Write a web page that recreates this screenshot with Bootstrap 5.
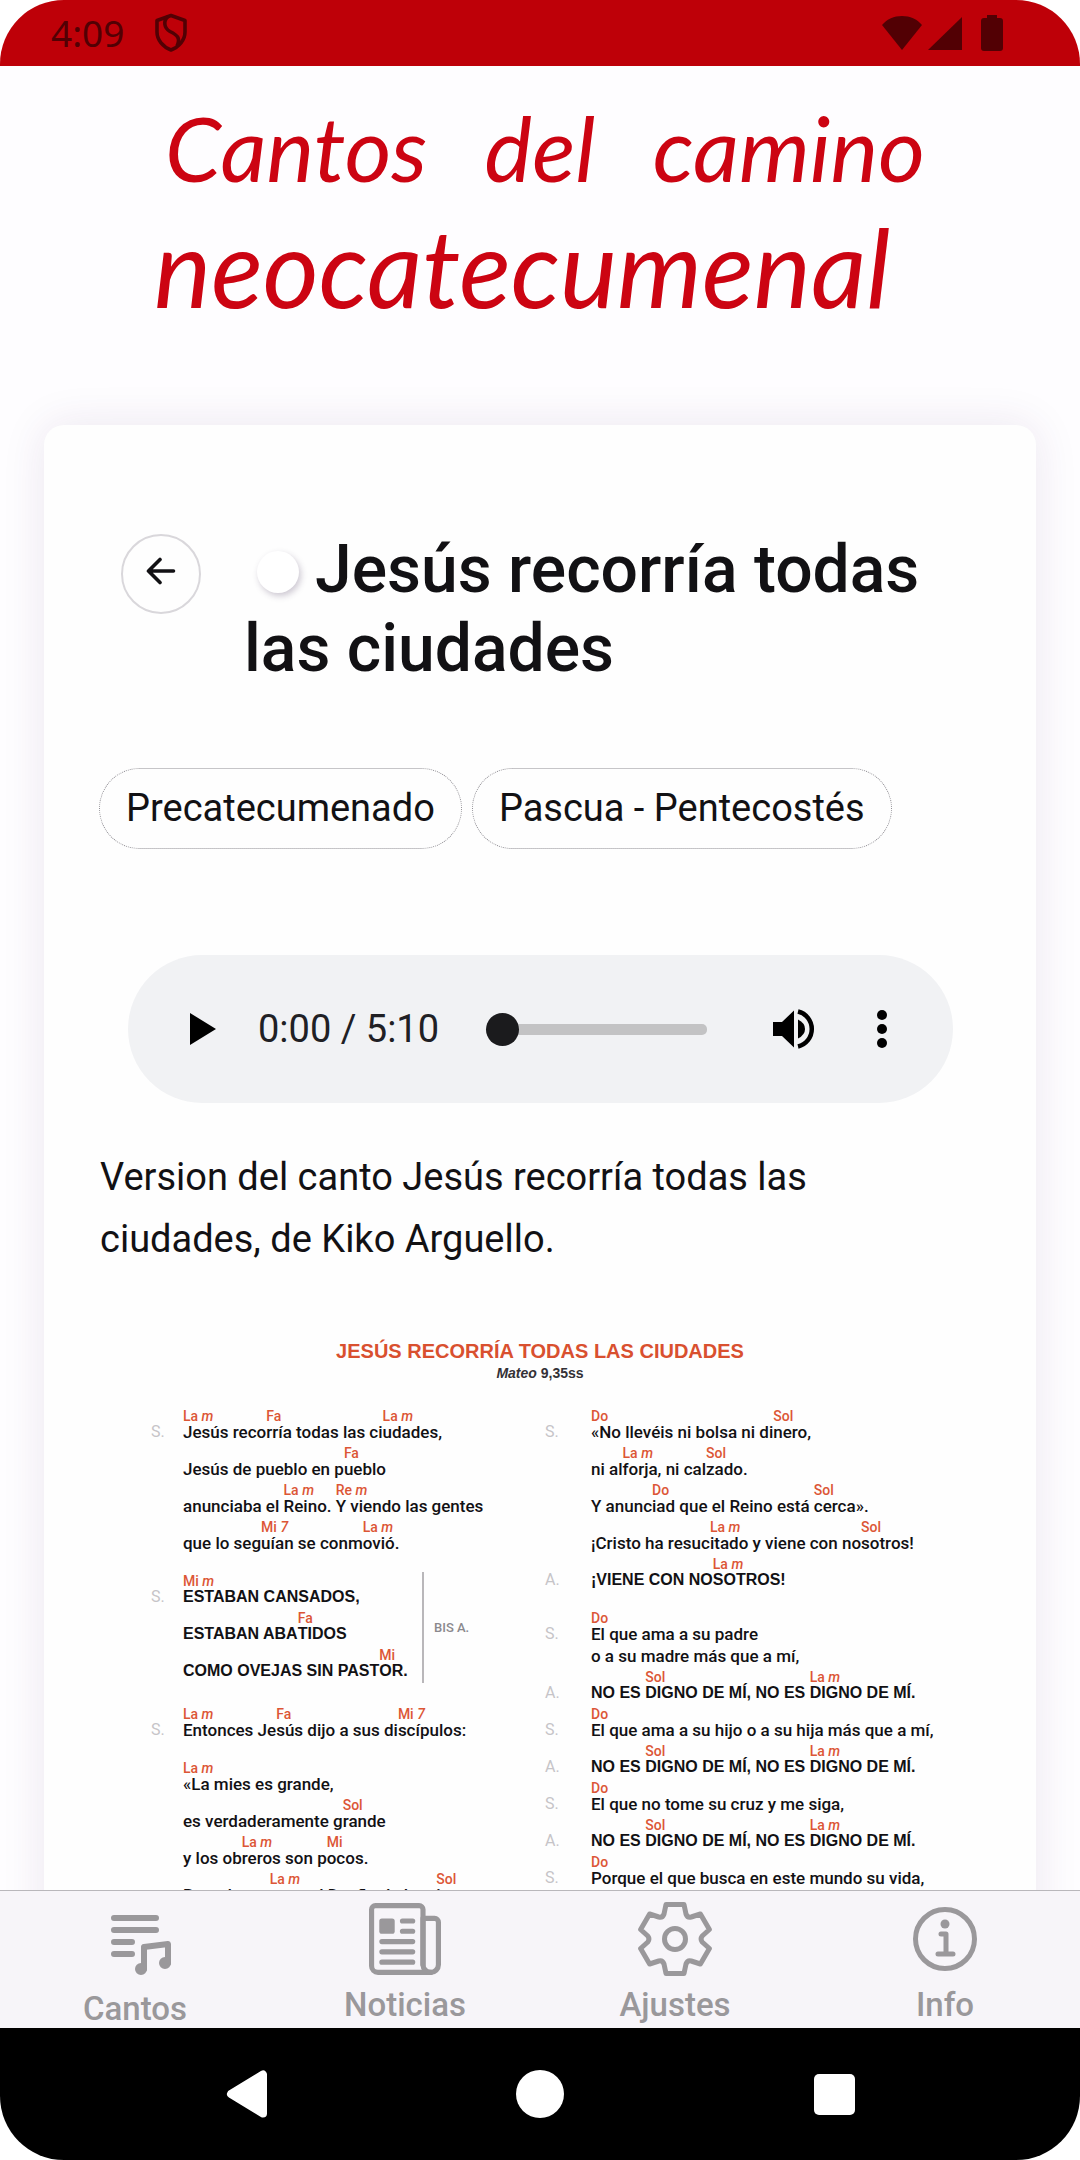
<!DOCTYPE html>
<html lang="es">
<head>
<meta charset="utf-8">
<meta name="viewport" content="width=device-width, initial-scale=1">
<title>Jesús recorría todas las ciudades</title>
<link href="https://cdn.jsdelivr.net/npm/bootstrap@5.3.0/dist/css/bootstrap.min.css" rel="stylesheet">
<style>
  body { font-family: Roboto, "Liberation Sans", sans-serif; background: #fff; color: #121114; }
  .device { border-radius: 64px; background: #fefdff; }
  svg { display: block; }

  .status-bar { height: 66px; flex: none; padding: 0 77px 0 51px; background: #be0008; color: #520004; }
  .clock { font: 37px/50px "Noto Sans", sans-serif; margin-right: 31px; }
  .status-icons { gap: 6px; }
  .battery { margin-left: 13px; }

  .brand { height: 359px; padding-top: 27px; color: #cc0412; font-family: Lato, sans-serif; font-style: italic; }
  .brand-top { font-size: 90px; line-height: 108px; padding: 0 155px 0 165px; }
  .brand-main { font-size: 108px; line-height: 130px; padding-left: 154px; }

  .song-card { margin: 0 44px; padding: 105px 56px 60px; border: 0; border-radius: 20px; background: #fefefe; color: inherit; box-shadow: 0 0 44px rgba(70, 30, 100, .1); }
  .back-btn { width: 80px; height: 80px; margin: 4px 43px 0 21px; padding: 0 0 6px; flex: none; border: 2px solid #d9d7db; border-radius: 50%; background: transparent; color: #121114; }
  .song-title { font-size: 66px; line-height: 79px; font-weight: 500; }
  .fav-dot { display: inline-block; width: 42px; height: 42px; margin: 0 16px 0 13px; vertical-align: -1px; border-radius: 50%; background: #fff; box-shadow: 2px 3px 6px rgba(60, 40, 80, .25); }
  .tags { gap: 10px; margin: 80px 0 0 -1px; }
  .tag { padding: 0 26px; border: 1px dotted #8e8c92; border-radius: 41px; font-size: 38px; line-height: 79px; color: inherit; text-decoration: none; }

  .player { height: 148px; margin: 106px 27px 0 28px; padding: 0 66px 0 62px; border-radius: 74px; background: #f1f2f4; }
  .player button { padding: 0; border: 0; background: none; color: #000; }
  .player-time { margin: 0 47px 0 42px; font-size: 38px; line-height: 48px; color: #202024; white-space: nowrap; }
  .seek { flex: 1 1 0; min-width: 0; height: 34px; margin: 0 66px 0 0; appearance: none; -webkit-appearance: none; background: transparent; }
  .seek::-webkit-slider-runnable-track { height: 11px; border-radius: 5px; background: #c3c3c4; }
  .seek::-webkit-slider-thumb { -webkit-appearance: none; width: 33px; height: 33px; margin-top: -11px; border-radius: 50%; background: #1b1b1d; }
  .volume { margin-right: 62px; }
  .about { margin: 43px 0 69px; padding-right: 24px; font-size: 38px; line-height: 62px; }

  .sheet { font-size: 17px; font-weight: 500; padding: 0 41px 0 51px; }
  .sheet-head { text-align: center; font-family: "Liberation Sans", sans-serif; font-weight: 700; padding-right: 10px; margin-bottom: 24px; }
  .sheet-head h2 { font-size: 20px; line-height: 24px; font-weight: 700; color: #d9502f; margin: 0; }
  .sheet-head p { font-size: 14px; line-height: 20px; color: #333136; margin: 0; }
  .verse { margin-bottom: 22px; }
  .line { display: flex; align-items: flex-end; margin-bottom: 5px; line-height: 14px; white-space: pre; }
  .line::before { content: attr(data-who); flex: none; width: 32px; color: #c6c4c8; font-family: Roboto, sans-serif; font-size: 16px; font-weight: 400; }
  .col-right .line::before { width: 46px; }
  .solo { padding-top: 3px; }
  .all { font-family: "Liberation Sans", sans-serif; font-size: 16px; font-weight: 700; }
  .at { display: flex; flex-direction: column; }
  .at i { font: 500 14px/18px Roboto, sans-serif; color: #dc5636; }
  .at em { font-style: italic; }
  .repeat { width: 273px; border-right: 2px solid #b9b7ba; }
  .repeat-note { margin-left: 10px; font: 500 13px/16px Roboto, sans-serif; color: #8b898d; }

  .tab-bar { height: 138px; flex: none; border-top: 1px solid #b9b7bb; background: #f7f5f9; padding-top: 11px; }
  .tab-bar a { display: flex; flex-direction: column; align-items: center; gap: 10px; color: #9a989b; font-size: 33px; line-height: 38px; font-weight: 500; text-decoration: none; }
  .system-nav { height: 132px; flex: none; gap: 246px; background: #000; }
  .system-nav button { padding: 0; border: 0; background: none; }
</style>
</head>
<body>
<div class="device vh-100 d-flex flex-column overflow-hidden">

  <div class="status-bar d-flex align-items-center">
    <span class="clock">4:09</span>
    <svg width="32" height="40" viewBox="0 0 32 40" fill="none" stroke="currentColor" stroke-width="3.6" stroke-linejoin="round"><path d="M16 2.500 30 7.500V19C30 27 24 34 16 37 8 34 2 27 2 19V7.500Z"/><path d="M13 3.500C8 8 9 15 15 18.500 22 22 26 25 22 33"/></svg>
    <div class="status-icons d-flex align-items-center ms-auto">
      <svg width="40" height="34" viewBox="0 0 40 34" fill="currentColor"><path d="M20 34 0 9C5 3 12 0 20 0S35 3 40 9Z"/></svg>
      <svg width="34" height="33" viewBox="0 0 34 33" fill="currentColor"><path d="M34 0V33H0Z"/></svg>
      <svg class="battery" width="22" height="36" viewBox="0 0 22 36" fill="currentColor"><path d="M6 3V0H16V3H19Q22 3 22 6V33Q22 36 19 36H3Q0 36 0 33V6Q0 3 3 3Z"/></svg>
    </div>
  </div>

  <main class="flex-fill overflow-hidden">
    <header class="brand">
      <div class="brand-top d-flex justify-content-between"><span>Cantos</span><span>del</span><span>camino</span></div>
      <div class="brand-main">neocatecumenal</div>
    </header>

    <article class="song-card card">
      <div class="d-flex align-items-start">
        <button class="back-btn d-flex align-items-center justify-content-center" type="button" aria-label="Volver">
          <svg width="30" height="28" viewBox="0 0 30 28" fill="none" stroke="currentColor" stroke-width="3.600" stroke-linecap="round" stroke-linejoin="round"><path d="M14 2.500 2.500 14 14 25.500M3 14H27.500"/></svg>
        </button>
        <h1 class="song-title mb-0"><span class="fav-dot"></span>Jesús recorría todas las ciudades</h1>
      </div>

      <div class="tags d-flex flex-wrap">
        <a class="tag" href="#">Precatecumenado</a>
        <a class="tag" href="#">Pascua - Pentecostés</a>
      </div>

      <div class="player d-flex align-items-center">
        <button type="button" aria-label="Reproducir"><svg width="26" height="32" viewBox="0 0 26 32"><path d="M0 0 26 16 0 32Z"/></svg></button>
        <span class="player-time">0:00 / 5:10</span>
        <input class="seek" type="range" min="0" max="310" value="0" aria-label="Posición">
        <button class="volume" type="button" aria-label="Volumen"><svg width="42" height="40" viewBox="0 0 42 40"><path d="M0 13H9L21 1.500V38.500L9 27H0Z"/><path d="M25 10.500Q32 14 32 20T25 29.500Z"/><path d="M25 2.500A18 18 0 0 1 25 37.500" fill="none" stroke="#000" stroke-width="4.500"/></svg></button>
        <button type="button" aria-label="Más opciones"><svg width="10" height="38" viewBox="0 0 10 38"><circle cx="5" cy="5" r="5"/><circle cx="5" cy="19" r="5"/><circle cx="5" cy="33" r="5"/></svg></button>
      </div>

      <p class="about">Version del canto Jesús recorría todas las ciudades, de Kiko Arguello.</p>

      <section class="sheet">
        <div class="sheet-head">
          <h2>JESÚS RECORRÍA TODAS LAS CIUDADES</h2>
          <p><em>Mateo</em> 9,35ss</p>
        </div>
        <div class="row g-0">
          <div class="col-6">
            <div class="verse">
              <div class="line" data-who="S."><span class="at"><i>La <em>m</em></i>Jesús reco</span><span class="at"><i>Fa</i>rría todas las ci</span><span class="at"><i>La <em>m</em></i>udades,</span></div>
              <div class="line" data-who=""><span>Jesús de pueblo en p</span><span class="at"><i>Fa</i>ueblo</span></div>
              <div class="line" data-who=""><span>anunciaba el </span><span class="at"><i>La <em>m</em></i>Reino. </span><span class="at"><i>Re <em>m</em></i>Y viendo las gentes</span></div>
              <div class="line" data-who=""><span>que lo seg</span><span class="at"><i>Mi <em>7</em></i>uían se conm</span><span class="at"><i>La <em>m</em></i>ovió.</span></div>
            </div>
            <div class="verse d-flex align-items-center">
              <div class="repeat">
                <div class="line all" data-who="S."><span class="at"><i>Mi <em>m</em></i>ESTABAN CANSADOS,</span></div>
                <div class="line all" data-who=""><span>ESTABAN ABA</span><span class="at"><i>Fa</i>TIDOS</span></div>
                <div class="line all" data-who=""><span>COMO OVEJAS SIN PAST</span><span class="at"><i>Mi</i>OR.</span></div>
              </div>
              <span class="repeat-note">BIS A.</span>
            </div>
            <div class="verse">
              <div class="line" data-who="S."><span class="at"><i>La <em>m</em></i>Entonces Je</span><span class="at"><i>Fa</i>sús dijo a sus di</span><span class="at"><i>Mi <em>7</em></i>scípulos:</span></div>
            </div>
            <div class="verse">
              <div class="line" data-who=""><span class="at"><i>La <em>m</em></i>«La mies es grande,</span></div>
              <div class="line" data-who=""><span>es verdaderamente g</span><span class="at"><i>Sol</i>rande</span></div>
              <div class="line" data-who=""><span>y los ob</span><span class="at"><i>La <em>m</em></i>reros son p</span><span class="at"><i>Mi</i>ocos.</span></div>
              <div class="line" data-who=""><span>Rogad ento</span><span class="at"><i>La <em>m</em></i>nces al Dueño de la m</span><span class="at"><i>Sol</i>ies</span></div>
            </div>
          </div>

          <div class="col-6 col-right">
            <div class="verse">
              <div class="line" data-who="S."><span class="at"><i>Do</i>«No llevéis ni bolsa ni di</span><span class="at"><i>Sol</i>nero,</span></div>
              <div class="line" data-who=""><span>ni al</span><span class="at"><i>La <em>m</em></i>forja, ni cal</span><span class="at"><i>Sol</i>zado.</span></div>
              <div class="line" data-who=""><span>Y anunc</span><span class="at"><i>Do</i>iad que el Reino está </span><span class="at"><i>Sol</i>cerca».</span></div>
              <div class="line" data-who=""><span>¡Cristo ha resuc</span><span class="at"><i>La <em>m</em></i>itado y viene con no</span><span class="at"><i>Sol</i>sotros!</span></div>
              <div class="line all" data-who="A."><span>¡VIENE CON NO</span><span class="at"><i>La <em>m</em></i>SOTROS!</span></div>
            </div>
            <div class="verse">
              <div class="line" data-who="S."><span class="at"><i>Do</i>El que ama a su padre</span></div>
              <div class="line solo" data-who="">o a su madre más que a mí,</div>
              <div class="line all" data-who="A."><span>NO ES </span><span class="at"><i>Sol</i>DIGNO DE MÍ, NO ES </span><span class="at"><i>La <em>m</em></i>DIGNO DE MÍ.</span></div>
              <div class="line" data-who="S."><span class="at"><i>Do</i>El que ama a su hijo o a su hija más que a mí,</span></div>
              <div class="line all" data-who="A."><span>NO ES </span><span class="at"><i>Sol</i>DIGNO DE MÍ, NO ES </span><span class="at"><i>La <em>m</em></i>DIGNO DE MÍ.</span></div>
              <div class="line" data-who="S."><span class="at"><i>Do</i>El que no tome su cruz y me siga,</span></div>
              <div class="line all" data-who="A."><span>NO ES </span><span class="at"><i>Sol</i>DIGNO DE MÍ, NO ES </span><span class="at"><i>La <em>m</em></i>DIGNO DE MÍ.</span></div>
              <div class="line" data-who="S."><span class="at"><i>Do</i>Porque el que busca en este mundo su vida,</span></div>
            </div>
          </div>
        </div>
      </section>
    </article>
  </main>

  <nav class="tab-bar row g-0 align-items-start">
    <a class="col-3" href="#">
      <svg width="72" height="78" viewBox="0 0 72 78" fill="none" stroke="currentColor" stroke-width="6" stroke-linecap="round" stroke-linejoin="round"><path d="M15 16H57M15 28H57M15 40H33M15 52H33M45 67V45L69 42V61"/><circle cx="42" cy="67" r="3"/><circle cx="66" cy="61" r="3"/></svg>
      <span>Cantos</span>
    </a>
    <a class="col-3" href="#">
      <svg width="72" height="74" viewBox="32 26 448 460" fill="none" stroke="currentColor" stroke-width="32" stroke-linecap="round" stroke-linejoin="round"><path d="M368 416V72a24 24 0 0 0-24-24H72a24 24 0 0 0-24 24v352a40 40 0 0 0 40 40h328"/><path d="M416 464a48 48 0 0 1-48-48V128h72a24 24 0 0 1 24 24v264a48 48 0 0 1-48 48z"/><path d="M240 144h64M240 208h64M112 272h192M112 336h192M112 400h192"/><path d="M176 224h-64a16 16 0 0 1-16-16v-64a16 16 0 0 1 16-16h64a16 16 0 0 1 16 16v64a16 16 0 0 1-16 16z" fill="currentColor" stroke="none"/></svg>
      <span>Noticias</span>
    </a>
    <a class="col-3" href="#">
      <svg width="74" height="74" viewBox="-37 -37 74 74" fill="none" stroke="currentColor" stroke-width="5" stroke-linejoin="round"><path d="M-11-25-9-34.500H9L11-25Q12.500-21 16.200-22L25.400-25 34.400-9.500 27.200-3Q25 0 27.200 3L34.400 9.500 25.400 25 16.200 22Q12.500 21 11 25L9 34.500H-9L-11 25Q-12.500 21-16.200 22L-25.400 25-34.400 9.500-27.200 3Q-25 0-27.200-3L-34.400-9.500-25.400-25-16.200-22Q-12.500-21-11-25Z"/><circle r="10.500"/></svg>
      <span>Ajustes</span>
    </a>
    <a class="col-3" href="#">
      <svg width="74" height="74" viewBox="-37 -37 74 74" fill="none" stroke="currentColor" stroke-width="5" stroke-linecap="round" stroke-linejoin="round"><circle r="29.500"/><path d="M-4-5H1V15M-7 15H8"/><circle cy="-15" r="4.500" fill="currentColor" stroke="none"/></svg>
      <span>Info</span>
    </a>
  </nav>

  <div class="system-nav d-flex align-items-center justify-content-center">
    <button type="button" aria-label="Atrás"><svg width="48" height="48" viewBox="0 0 48 48" fill="#fff" stroke="#fff" stroke-width="8" stroke-linejoin="round"><path d="M41 4.500V43.500L9 24Z"/></svg></button>
    <button type="button" aria-label="Inicio"><svg width="48" height="48" viewBox="0 0 48 48" fill="#fff"><circle cx="24" cy="24" r="24"/></svg></button>
    <button type="button" aria-label="Recientes"><svg width="48" height="48" viewBox="0 0 48 48" fill="#fff"><rect x="4" y="4" width="41" height="41" rx="5"/></svg></button>
  </div>
</div>
<script src="https://cdn.jsdelivr.net/npm/bootstrap@5.3.0/dist/js/bootstrap.bundle.min.js"></script>
</body>
</html>
